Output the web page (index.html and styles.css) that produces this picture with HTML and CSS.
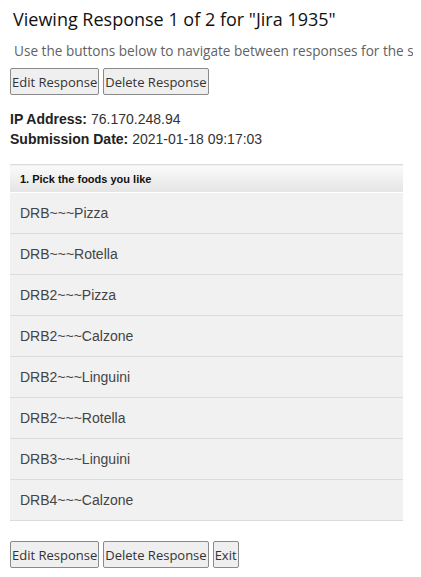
FILE: index.html
```
<!DOCTYPE html>
<html>

<head>
    <meta charset="UTF-8">
    <meta name="viewport" content="width=device-width, initial-scale=1.0">
    <title>View Response</title>
    <link rel="stylesheet" href="styles.css">
</head>

<body>
    <div class="page">
        <h2 class="title">Viewing Response 1 of 2 for "Jira 1935"</h2>
        <p class="intro">Use the buttons below to navigate between responses for the survey, or edit and delete the current response.</p>

        <div class="actions">
            <button class="btn">Edit Response</button>
            <button class="btn">Delete Response</button>
        </div>

        <div class="meta">
            <div><b>IP Address:</b> 76.170.248.94</div>
            <div><b>Submission Date:</b> 2021-01-18 09:17:03</div>
        </div>

        <table class="answers">
            <tr>
                <th>1. Pick the foods you like</th>
            </tr>
            <tr><td>DRB~~~Pizza</td></tr>
            <tr><td>DRB~~~Rotella</td></tr>
            <tr><td>DRB2~~~Pizza</td></tr>
            <tr><td>DRB2~~~Calzone</td></tr>
            <tr><td>DRB2~~~Linguini</td></tr>
            <tr><td>DRB2~~~Rotella</td></tr>
            <tr><td>DRB3~~~Linguini</td></tr>
            <tr><td>DRB4~~~Calzone</td></tr>
        </table>

        <div class="actions bottom">
            <button class="btn">Edit Response</button>
            <button class="btn">Delete Response</button>
            <button class="btn">Exit</button>
        </div>
    </div>
</body>

</html>
```
FILE: styles.css
```
body {
    margin: 0;
    font-family: "Open Sans", sans-serif;
    color: #222;
}

.page {
    width: 393px;
    padding: 0 10px;
    overflow: hidden;
}

.title {
    margin: 0;
    padding: 7px 0 0 3px;
    font-size: 18px;
    font-weight: normal;
    line-height: 24px;
    color: #111;
}

/* the page cuts this line off at the right edge */
.intro {
    margin: 0;
    padding: 11px 0 0 4px;
    font-size: 13.6px;
    line-height: 18px;
    color: #626262;
    white-space: nowrap;
}

.actions {
    display: flex;
    gap: 4px;
    margin-top: 8px;
}

.btn {
    font-family: "Open Sans", sans-serif;
    font-size: 13px;
    color: #333;
    background-color: #efefef;
    border: 1px solid #8a8a8a;
    border-radius: 2px;
    padding: 0 1px;
    height: 27px;
}

.meta {
    margin-top: 14px;
    font-family: "Liberation Sans", Arial, sans-serif;
    font-size: 14px;
    line-height: 20px;
    color: #333;
}

.meta b {
    color: #222;
}

.answers {
    width: 100%;
    margin-top: 15px;
    border-collapse: collapse;
    font-family: "Liberation Sans", Arial, sans-serif;
}

.answers th {
    text-align: left;
    font-size: 11px;
    color: #111;
    height: 27px;
    padding: 0 0 0 10px;
    border-top: 1px solid #dcdcdc;
    border-bottom: 1px solid #fff;
    background: linear-gradient(#fafafa, #e4e4e4);
}

.answers td {
    font-size: 14px;
    color: #444;
    height: 40px;
    padding: 0 0 0 10px;
    background-color: #f1f1f1;
    border-bottom: 1px solid #dcdcdc;
}

.actions.bottom {
    margin-top: 20px;
}
```
